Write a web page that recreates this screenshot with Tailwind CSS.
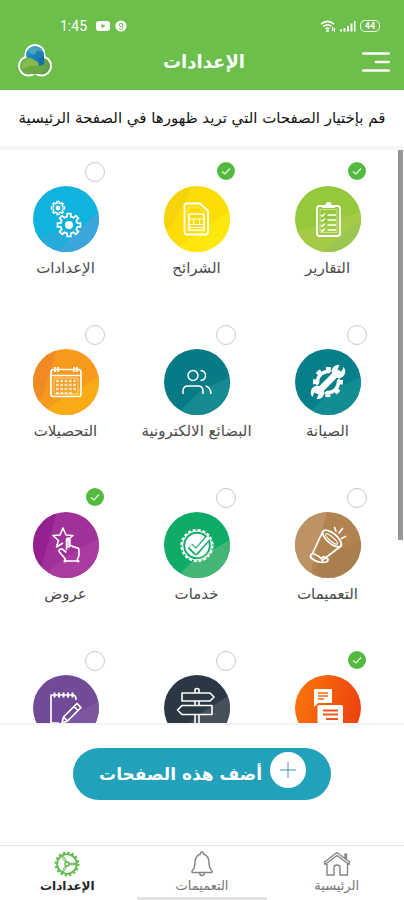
<!DOCTYPE html>
<html lang="ar" dir="rtl">
<head>
<meta charset="utf-8">
<meta name="viewport" content="width=device-width, initial-scale=1">
<title>الإعدادات</title>
<script src="https://cdn.jsdelivr.net/npm/@tailwindcss/browser@4"></script>
</head>
<body class="bg-white">
<svg class="absolute size-0" aria-hidden="true">
  <defs>
    <path id="gear" d="M8-1.8L10.9-1.7V1.7L8 1.8L7 4.4L8.9 6.5L6.5 8.9L4.4 7L1.8 8L1.7 10.9H-1.7L-1.8 8L-4.4 7L-6.5 8.9L-8.9 6.5L-7 4.4L-8 1.8L-10.9 1.7V-1.7L-8-1.8L-7-4.4L-8.9-6.5L-6.5-8.9L-4.4-7L-1.8-8L-1.7-10.9H1.7L1.8-8L4.4-7L6.5-8.9L8.9-6.5L7-4.4Z"/>
    <linearGradient id="flame" x1="0" y1="0" x2="1" y2="0.3"><stop offset="0" stop-color="#f97a0a"/><stop offset="1" stop-color="#ee4510"/></linearGradient>
  </defs>
</svg>
<div class="flex h-screen flex-col overflow-hidden font-['DejaVu_Sans','Noto_Sans',sans-serif]">

  <header class="shrink-0 bg-[#6bbf4a] text-white">
    <div dir="ltr" class="flex h-10 items-center pt-3 pr-6 pl-15">
      <span class="font-['Roboto',sans-serif] text-sm leading-4">1:45</span>
      <svg class="ml-2 h-3 w-4" viewBox="0 0 16 12" aria-hidden="true"><rect x="1" y="1" width="14" height="10" rx="3" fill="#fff"/><path d="M6.500 3.800v4.400l4-2.200z" fill="#6bbf4a"/></svg>
      <svg class="ml-1 h-3 w-3" viewBox="0 0 12 12" aria-hidden="true"><circle cx="6" cy="6" r="5.600" fill="#fff"/><path d="M7.800 3.500v4q0 1.800-1.800 1.800t-1.800-1" fill="none" stroke="#6bbf4a" stroke-width=".9"/><circle cx="6" cy="5" r="1.700" fill="none" stroke="#6bbf4a" stroke-width=".9"/></svg>
      <span class="flex-1"></span>
      <svg class="h-3 w-4" viewBox="0 0 16 12" fill="none" stroke="#fff" stroke-width="1.600" aria-hidden="true"><path d="M1 4.200Q7.500-1.500 14 4.200M3.200 6.600Q7.500 3 11.500 6.300M5.500 8.800Q7.500 7.300 9.300 8.800"/><circle cx="7.500" cy="10.700" r=".6"/><path d="M12.600 7v4M14.500 8v4" stroke-width="1.200"/></svg>
      <svg class="ml-1 h-3 w-4" viewBox="0 0 16 12" fill="#fff" aria-hidden="true"><path d="M0 9.500h2v2H0zM3.500 8h2v3.500h-2zM7 6h2v5.500H7zM10.500 3.500h2v8h-2zM14 1h1.500v10.500H14z"/></svg>
      <span class="ml-1 flex h-3 w-5 items-center justify-center rounded-[5px] border border-white font-['Roboto',sans-serif] text-[9px] leading-none font-bold">44</span>
    </div>
    <div class="flex h-[50px] items-start justify-between px-3.5 pt-1">
      <button type="button" aria-label="القائمة" class="flex h-9 w-7 items-center">
        <svg class="h-6 w-7" viewBox="0 0 28 24" fill="none" stroke="#fff" stroke-width="2.600" stroke-linecap="round" aria-hidden="true"><path d="M1.300 3.500H26.700M14 12H26.700M1.300 20.500H26.700"/></svg>
      </button>
      <h1 class="pr-2 text-lg leading-9 font-bold">الإعدادات</h1>
      <svg class="h-9 w-10" viewBox="0 0 40 36" role="img" aria-label="الشعار">
        <g fill="#fff"><circle cx="21" cy="10.500" r="10.500"/><circle cx="14.500" cy="22" r="10.500"/><circle cx="27.500" cy="22" r="10.500"/></g>
        <circle cx="21" cy="11" r="9" fill="#2590c5"/><path d="M13 7q7-8 15 0l-6 5z" fill="#48a8b8"/>
        <circle cx="14.500" cy="22" r="8.600" fill="#6caf48"/><circle cx="27.500" cy="22" r="8.600" fill="#5ea049"/><path d="M14 18h14v12H14z" fill="#69a843"/>
        <path d="M13 12q7 2 9 7l8-3V9l-6-3-4 5z" fill="#1d7fb8"/><path d="M24 14l6-2v8l-5 3z" fill="#176fa8"/>
        <path d="M7 22Q14 8 25 20l-4 9q-8 2-14-7z" fill="#86bd4a"/><path d="M8 26q10-7 25-3-4 8-11 6-8 2-14-3z" fill="#69a843"/>
      </svg>
    </div>
  </header>

  <p class="flex h-14 shrink-0 items-center justify-center text-[15px] leading-6 whitespace-nowrap text-[#111]">قم بإختيار الصفحات التي تريد ظهورها في الصفحة الرئيسية</p>

  <main class="relative min-h-0 flex-1 border-t-4 border-b-2 border-[#f5f5f5]">
    <div class="absolute top-0 right-px z-10 h-[390px] w-[5px] bg-[#959595]"></div>
    <div class="grid h-full auto-rows-[163px] grid-cols-3 overflow-y-auto pr-[11px] text-[15px] text-[#4b4b4b] [scrollbar-width:none]">

      <label class="flex flex-col items-center pt-3">
        <span class="grid h-6 w-5 translate-x-[29px] justify-items-center">
          <input type="checkbox" checked class="peer col-start-1 row-start-1 size-5 appearance-none rounded-full border border-[#c9c9c9] checked:size-[18px] checked:border-0 checked:bg-[#55b940]">
          <svg class="pointer-events-none invisible col-start-1 row-start-1 size-[18px] peer-checked:visible" viewBox="0 0 18 18" fill="none" stroke="#e4ffdc" stroke-width="1.200" aria-hidden="true"><path d="M5 9.500l3 2.500 5-5.500"/></svg>
        </span>
        <svg class="size-[66px] rounded-full" viewBox="0 0 66 66" aria-hidden="true">
          <path fill="#96c83c" d="M0 0h66v66H0z"/><path fill="#a3cb45" d="M0 46L66 26V66H0z"/><path fill="#9bc652" d="M26 66L66 34V66z"/>
          <g fill="none" stroke="#fff" stroke-width="1.800"><rect x="22" y="20" width="23" height="30" rx="2.500"/><path d="M25 23.500h17v23H25z" stroke-width=".8" opacity=".6"/><path d="M26 29l1.300 1.300L30 27.500M26 34l1.300 1.300L30 32.500M26 39l1.300 1.300L30 37.500M26 44l1.300 1.300L30 42.500M32.500 29H41M32.500 34H41M32.500 39H41M32.500 44H41" stroke-width="1.300"/></g><path d="M27 22v-3h3.500q0-3 3-3t3 3H40v3z" fill="#fff"/>
        </svg>
        <span class="mt-1 leading-6 whitespace-nowrap">التقارير</span>
      </label>

      <label class="flex flex-col items-center pt-3">
        <span class="grid h-6 w-5 translate-x-[29px] justify-items-center">
          <input type="checkbox" checked class="peer col-start-1 row-start-1 size-5 appearance-none rounded-full border border-[#c9c9c9] checked:size-[18px] checked:border-0 checked:bg-[#55b940]">
          <svg class="pointer-events-none invisible col-start-1 row-start-1 size-[18px] peer-checked:visible" viewBox="0 0 18 18" fill="none" stroke="#e4ffdc" stroke-width="1.200" aria-hidden="true"><path d="M5 9.500l3 2.500 5-5.500"/></svg>
        </span>
        <svg class="size-[66px] rounded-full" viewBox="0 0 66 66" aria-hidden="true">
          <path fill="#fbdc05" d="M0 0h66v66H0z"/><path fill="#fde70e" d="M8 66L66 24V66z"/><path fill="#f6d40d" d="M0 0H28L8 40 0 44z"/>
          <g fill="none" stroke="#fff"><path d="M23 17.500H36L44 25V46q0 2.500-2.500 2.500H23q-2.500 0-2.500-2.500V20q0-2.500 2.500-2.500z" stroke-width="1.800"/><path d="M24 21h10.500L40.500 26.500V45H24z" stroke-width=".8" opacity=".5"/><rect x="25" y="28" width="15" height="16" rx="1.500" stroke-width="1.500"/><path d="M25 33h4.500v5.500H25M40 33h-4.500v5.500H40M29.500 33h6M29.500 38.500h6M25 41.500h15" stroke-width="1.100"/></g>
        </svg>
        <span class="mt-1 leading-6 whitespace-nowrap">الشرائح</span>
      </label>

      <label class="flex flex-col items-center pt-3">
        <span class="grid h-6 w-5 translate-x-[29px] justify-items-center">
          <input type="checkbox" class="peer col-start-1 row-start-1 size-5 appearance-none rounded-full border border-[#c9c9c9] checked:size-[18px] checked:border-0 checked:bg-[#55b940]">
          <svg class="pointer-events-none invisible col-start-1 row-start-1 size-[18px] peer-checked:visible" viewBox="0 0 18 18" fill="none" stroke="#e4ffdc" stroke-width="1.200" aria-hidden="true"><path d="M5 9.500l3 2.500 5-5.500"/></svg>
        </span>
        <svg class="size-[66px] rounded-full" viewBox="0 0 66 66" aria-hidden="true">
          <path fill="#10b2de" d="M0 0h66v66H0z"/><path fill="#3ba6d9" d="M22 66L66 25V66z"/><path fill="#25acdb" d="M0 52L40 42 22 66H0z"/>
          <g fill="none" stroke="#fff"><use href="#gear" transform="translate(36 39) scale(1.050)" stroke-width="1.700"/><use href="#gear" transform="translate(25 22) scale(.6)" stroke-width="2.300"/></g><circle cx="36" cy="39" r="4" fill="#fff"/><circle cx="25" cy="22" r="2.400" fill="#fff"/>
        </svg>
        <span class="mt-1 leading-6 whitespace-nowrap">الإعدادات</span>
      </label>

      <label class="flex flex-col items-center pt-3">
        <span class="grid h-6 w-5 translate-x-[29px] justify-items-center">
          <input type="checkbox" class="peer col-start-1 row-start-1 size-5 appearance-none rounded-full border border-[#c9c9c9] checked:size-[18px] checked:border-0 checked:bg-[#55b940]">
          <svg class="pointer-events-none invisible col-start-1 row-start-1 size-[18px] peer-checked:visible" viewBox="0 0 18 18" fill="none" stroke="#e4ffdc" stroke-width="1.200" aria-hidden="true"><path d="M5 9.500l3 2.500 5-5.500"/></svg>
        </span>
        <svg class="size-[66px] rounded-full" viewBox="0 0 66 66" aria-hidden="true">
          <path fill="#077f89" d="M0 0h66v66H0z"/><path fill="#138d94" d="M12 66L36 42 66 28V66z"/>
          <g fill="none" stroke="#fff"><circle cx="33" cy="33" r="10.500" stroke-width="3.500"/><circle cx="33" cy="33" r="13.200" stroke-width="3.600" stroke-dasharray="5 5.367" stroke-dashoffset="2.500"/></g>
          <path d="M20 46L46 20" stroke="#0a838c" stroke-width="10.500"/>
          <path d="M23 43L43 23" stroke="#fff" stroke-width="6.500"/>
          <circle cx="43.500" cy="22.500" r="6.800" fill="#fff"/><circle cx="22.500" cy="43.500" r="6.800" fill="#fff"/>
          <path d="M44.500 21.500L48 14" stroke="#077f89" stroke-width="4.500"/><path d="M21.500 44.500L18 52" stroke="#077f89" stroke-width="4.500"/>
        </svg>
        <span class="mt-1 leading-6 whitespace-nowrap">الصيانة</span>
      </label>

      <label class="flex flex-col items-center pt-3">
        <span class="grid h-6 w-5 translate-x-[29px] justify-items-center">
          <input type="checkbox" class="peer col-start-1 row-start-1 size-5 appearance-none rounded-full border border-[#c9c9c9] checked:size-[18px] checked:border-0 checked:bg-[#55b940]">
          <svg class="pointer-events-none invisible col-start-1 row-start-1 size-[18px] peer-checked:visible" viewBox="0 0 18 18" fill="none" stroke="#e4ffdc" stroke-width="1.200" aria-hidden="true"><path d="M5 9.500l3 2.500 5-5.500"/></svg>
        </span>
        <svg class="size-[66px] rounded-full" viewBox="0 0 66 66" aria-hidden="true">
          <path fill="#077b85" d="M0 0h66v66H0z"/><path fill="#168a91" d="M12 66L36 42 66 28V66z"/>
          <g fill="none" stroke="#fff" stroke-width="1.500"><circle cx="29" cy="26.500" r="5"/><path d="M19 45v-3q0-5 5-5h10q5 0 5 5v3M36.500 21.500q5 .5 5 5t-5 5M41.500 37q5 1 5.500 8"/></g>
        </svg>
        <span class="mt-1 leading-6 whitespace-nowrap">البضائع الالكترونية</span>
      </label>

      <label class="flex flex-col items-center pt-3">
        <span class="grid h-6 w-5 translate-x-[29px] justify-items-center">
          <input type="checkbox" class="peer col-start-1 row-start-1 size-5 appearance-none rounded-full border border-[#c9c9c9] checked:size-[18px] checked:border-0 checked:bg-[#55b940]">
          <svg class="pointer-events-none invisible col-start-1 row-start-1 size-[18px] peer-checked:visible" viewBox="0 0 18 18" fill="none" stroke="#e4ffdc" stroke-width="1.200" aria-hidden="true"><path d="M5 9.500l3 2.500 5-5.500"/></svg>
        </span>
        <svg class="size-[66px] rounded-full" viewBox="0 0 66 66" aria-hidden="true">
          <path fill="#f79a1c" d="M0 0h66v66H0z"/><path fill="#f08a24" d="M0 0H24L12 40 0 66z"/><path fill="#f9ab16" d="M6 66L34 46 66 28V66z"/>
          <g fill="none" stroke="#fff"><rect x="18" y="20.500" width="30" height="27" rx="2.500" stroke-width="1.700"/><path d="M18 26.500H48" stroke-width="1.500"/><path d="M21 29h24v16H21z" stroke-width=".8" opacity=".7"/><path d="M23 32h20M23 36h20M23 40h20M23 44h17" stroke-width="2.300" stroke-dasharray="3 1.250" opacity=".7"/><path d="M22 18v5M25 18v5M41 18v5M44 18v5" stroke-width="1.800"/></g>
        </svg>
        <span class="mt-1 leading-6 whitespace-nowrap">التحصيلات</span>
      </label>

      <label class="flex flex-col items-center pt-3">
        <span class="grid h-6 w-5 translate-x-[29px] justify-items-center">
          <input type="checkbox" class="peer col-start-1 row-start-1 size-5 appearance-none rounded-full border border-[#c9c9c9] checked:size-[18px] checked:border-0 checked:bg-[#55b940]">
          <svg class="pointer-events-none invisible col-start-1 row-start-1 size-[18px] peer-checked:visible" viewBox="0 0 18 18" fill="none" stroke="#e4ffdc" stroke-width="1.200" aria-hidden="true"><path d="M5 9.500l3 2.500 5-5.500"/></svg>
        </span>
        <svg class="size-[66px] rounded-full" viewBox="0 0 66 66" aria-hidden="true">
          <path fill="#b1834f" d="M0 0h66v66H0z"/><path fill="#bd9264" d="M0 0H32L14 66H0z"/><path fill="#a97f50" d="M14 66L30 44 66 28V66z"/>
          <g fill="none" stroke="#fff" stroke-width="1.700" stroke-linejoin="round" stroke-linecap="round"><ellipse cx="37" cy="26.500" rx="11.500" ry="5" transform="rotate(40 37 26.500)"/><ellipse cx="36.500" cy="27" rx="7.500" ry="2" transform="rotate(40 36.500 27)" stroke-width="1.200"/><path d="M27.500 20L17.500 41.500M46 34L27 48.500M17.500 41.500q-3 2-1.500 4.500 4 3.500 10 4.500 2-1 1-3-3-4-9.500-6M26 46.500q3-3 4-1l3 1.500q0 3-2 3l-4 .5M41 19l-1.500-3.500M44 21l3.500-4.500M46.500 26.500l4-2"/></g>
        </svg>
        <span class="mt-1 leading-6 whitespace-nowrap">التعميمات</span>
      </label>

      <label class="flex flex-col items-center pt-3">
        <span class="grid h-6 w-5 translate-x-[29px] justify-items-center">
          <input type="checkbox" class="peer col-start-1 row-start-1 size-5 appearance-none rounded-full border border-[#c9c9c9] checked:size-[18px] checked:border-0 checked:bg-[#55b940]">
          <svg class="pointer-events-none invisible col-start-1 row-start-1 size-[18px] peer-checked:visible" viewBox="0 0 18 18" fill="none" stroke="#e4ffdc" stroke-width="1.200" aria-hidden="true"><path d="M5 9.500l3 2.500 5-5.500"/></svg>
        </span>
        <svg class="size-[66px] rounded-full" viewBox="0 0 66 66" aria-hidden="true">
          <path fill="#0eac67" d="M0 0h66v66H0z"/><path fill="#43b675" d="M12 66L30 48 66 28V66z"/>
          <circle cx="33" cy="33.500" r="15.500" fill="none" stroke="#fff" stroke-width="2.200" stroke-dasharray="3.200 1.670"/><circle cx="33" cy="33.500" r="14.300" fill="none" stroke="#fff" stroke-width="1.100"/>
          <circle cx="33" cy="33.500" r="11.800" fill="#fff"/><path d="M26 34l6 6L44 26" fill="none" stroke="#16ad69" stroke-width="6.500" stroke-linejoin="round"/><path d="M26.500 34l5.500 5.500L44.500 25.500" fill="none" stroke="#fff" stroke-width="3.600"/>
        </svg>
        <span class="mt-1 leading-6 whitespace-nowrap">خدمات</span>
      </label>

      <label class="flex flex-col items-center pt-3">
        <span class="grid h-6 w-5 translate-x-[29px] justify-items-center">
          <input type="checkbox" checked class="peer col-start-1 row-start-1 size-5 appearance-none rounded-full border border-[#c9c9c9] checked:size-[18px] checked:border-0 checked:bg-[#55b940]">
          <svg class="pointer-events-none invisible col-start-1 row-start-1 size-[18px] peer-checked:visible" viewBox="0 0 18 18" fill="none" stroke="#e4ffdc" stroke-width="1.200" aria-hidden="true"><path d="M5 9.500l3 2.500 5-5.500"/></svg>
        </span>
        <svg class="size-[66px] rounded-full" viewBox="0 0 66 66" aria-hidden="true">
          <path fill="#a0309a" d="M0 0h66v66H0z"/><path fill="#952191" d="M0 0H24L8 56 0 60z"/><path fill="#ab3c9f" d="M8 66L34 44 66 26V66z"/>
          <g fill="none" stroke="#fff" stroke-width="1.600" stroke-linejoin="round"><path d="M33 29.500l7-6-7-.5-3-7-3 7-7 .5 5.500 5-2 6.500 6.500-4"/><path d="M33.500 38V28.500q0-2.500 1.700-2.500t1.700 2.500V34q2-1 3 1 2-1 3 1 3-1 3 2v6l-1.500 3v2H32v-2.500l-6-7q0-3 3-2.500l4.500 3.500"/></g><g fill="#fff"><circle cx="32" cy="49" r="1.500"/><circle cx="45" cy="49" r="1.500"/><path d="M33.500 28.500q0-2.500 1.700-2.500t1.700 2.500V36h-3.400z" opacity=".7"/></g>
        </svg>
        <span class="mt-1 leading-6 whitespace-nowrap">عروض</span>
      </label>

      <label class="flex flex-col items-center pt-3">
        <span class="grid h-6 w-5 translate-x-[29px] justify-items-center">
          <input type="checkbox" checked aria-label="الرسائل" class="peer col-start-1 row-start-1 size-5 appearance-none rounded-full border border-[#c9c9c9] checked:size-[18px] checked:border-0 checked:bg-[#55b940]">
          <svg class="pointer-events-none invisible col-start-1 row-start-1 size-[18px] peer-checked:visible" viewBox="0 0 18 18" fill="none" stroke="#e4ffdc" stroke-width="1.200" aria-hidden="true"><path d="M5 9.500l3 2.500 5-5.500"/></svg>
        </span>
        <svg class="size-[66px] rounded-full" viewBox="0 0 66 66" aria-hidden="true">
          <path fill="url(#flame)" d="M0 0h66v66H0z"/>
          <path d="M21 14H36q1 0 1 1V28H23l-4 4V15q0-1 2-1z" fill="#fff"/><path d="M23 18h10M23 21h10M23 24h6" stroke="#f0691a" stroke-width="1.500"/>
          <path d="M24 30H46q2 0 2 2V55l-5-5H24q-1.500 0-1.500-1.500V31.500Q22.500 30 24 30z" fill="#fff"/><path d="M28 35.500H43M28 39.500H43M31 44H43" stroke="#ee5518" stroke-width="1.900"/>
        </svg>
      </label>

      <label class="flex flex-col items-center pt-3">
        <span class="grid h-6 w-5 translate-x-[29px] justify-items-center">
          <input type="checkbox" aria-label="الدليل" class="peer col-start-1 row-start-1 size-5 appearance-none rounded-full border border-[#c9c9c9] checked:size-[18px] checked:border-0 checked:bg-[#55b940]">
          <svg class="pointer-events-none invisible col-start-1 row-start-1 size-[18px] peer-checked:visible" viewBox="0 0 18 18" fill="none" stroke="#e4ffdc" stroke-width="1.200" aria-hidden="true"><path d="M5 9.500l3 2.500 5-5.500"/></svg>
        </span>
        <svg class="size-[66px] rounded-full" viewBox="0 0 66 66" aria-hidden="true">
          <path fill="#2b3742" d="M0 0h66v66H0z"/><path fill="#45505b" d="M8 66L34 40 66 20V66z"/>
          <g fill="none" stroke="#fff" stroke-width="1.600" stroke-linejoin="round"><path d="M31 18v-3q0-1.500 2-1.500t2 1.500V18M31 26v4.500M35 26v4.500M31 39.500V60M35 39.500V60"/><path d="M18 18H46l4 4-4 4H18zM18 30.500H48v9H18l-4.500-4.500z"/></g>
        </svg>
      </label>

      <label class="flex flex-col items-center pt-3">
        <span class="grid h-6 w-5 translate-x-[29px] justify-items-center">
          <input type="checkbox" aria-label="الملاحظات" class="peer col-start-1 row-start-1 size-5 appearance-none rounded-full border border-[#c9c9c9] checked:size-[18px] checked:border-0 checked:bg-[#55b940]">
          <svg class="pointer-events-none invisible col-start-1 row-start-1 size-[18px] peer-checked:visible" viewBox="0 0 18 18" fill="none" stroke="#e4ffdc" stroke-width="1.200" aria-hidden="true"><path d="M5 9.500l3 2.500 5-5.500"/></svg>
        </span>
        <svg class="size-[66px] rounded-full" viewBox="0 0 66 66" aria-hidden="true">
          <path fill="#714b97" d="M0 0h66v66H0z"/><path fill="#7c569f" d="M12 66L34 44 66 26V66z"/>
          <g fill="none" stroke="#fff" stroke-width="1.700" stroke-linejoin="round"><path d="M26 48H18V20H40q3 0 3 5"/><path d="M21.500 17.500v5M26 17.500v5M30.500 17.500v5M35 17.500v5M39.500 17.500v5" stroke-width="2"/><path d="M29 48l1.500-6L44 28.500l4 4.200L34.500 46zM30.500 42l4 4M41 31.500l4 4"/></g>
        </svg>
      </label>
    </div>
  </main>

  <div class="flex h-[120px] shrink-0 items-start justify-center pt-[23px]">
    <button type="button" class="flex h-[52px] w-[258px] items-start rounded-full bg-[#22a1ba] pt-1 pr-[25px] text-white">
      <span class="flex size-9 shrink-0 items-center justify-center rounded-full bg-white">
        <svg class="size-4" viewBox="0 0 16 16" stroke="#4496a5" fill="none" aria-hidden="true"><path d="M8 0v16M0 8h16"/></svg>
      </span>
      <span class="mr-2 text-[17px] leading-11 font-bold whitespace-nowrap">أضف هذه الصفحات</span>
    </button>
  </div>

  <nav class="relative grid h-[55px] shrink-0 grid-cols-3 border-t border-[#e4e4e4] text-[13px] text-[#777]">
    <a href="#home" class="flex flex-col items-center pt-1">
      <svg class="h-7 w-7" viewBox="0 0 28 28" fill="none" stroke="#858585" stroke-width="1.400" stroke-linejoin="round" aria-hidden="true"><path d="M4 14V25H11V17.500q0-2.500 3-2.500t3 2.500V25H24.500V14M2 14.500L1.500 12 14 2.500 26.500 12l-.5 2.500-12-9zM22 8V4h1.500v5"/></svg>
      <span class="leading-4">الرئيسية</span>
    </a>
    <a href="#circulars" class="flex flex-col items-center pt-1">
      <svg class="h-7 w-7" viewBox="0 0 28 28" fill="none" stroke="#858585" stroke-width="1.400" stroke-linejoin="round" aria-hidden="true"><path d="M12.500 4q0-2 1.500-2t1.500 2Q20.500 5.500 21 12q0 5 1.500 7 2 2 1.500 3.500H4Q3.500 21 5.500 19q1.500-2 1.500-7Q7.500 5.500 12.500 4zM11.500 22.500q0 3 2.500 3t2.500-3"/></svg>
      <span class="leading-4">التعميمات</span>
    </a>
    <a href="#settings" aria-current="page" class="flex flex-col items-center pt-1 text-xs font-bold text-[#222]">
      <svg class="h-7 w-7" viewBox="0 0 28 28" fill="none" stroke="#5bb947" aria-hidden="true"><circle cx="14" cy="14" r="9.800" stroke-width="1.800"/><circle cx="14" cy="14" r="11.400" stroke-width="2" stroke-dasharray="2.200 2.276"/><circle cx="14" cy="14" r="2" stroke-width="1.500"/><path d="M16 13.300h8M16 14.700h8M12.500 12.500L8.500 6M14 12l-4-6.500M12.500 15.500L8.500 22M14 16l-4 6.500" stroke-width="1"/></svg>
      <span class="leading-4">الإعدادات</span>
    </a>
    <div class="absolute inset-x-[34%] bottom-0 h-[3px] rounded-full bg-[#e2e2e2]"></div>
  </nav>
</div>
</body>
</html>
